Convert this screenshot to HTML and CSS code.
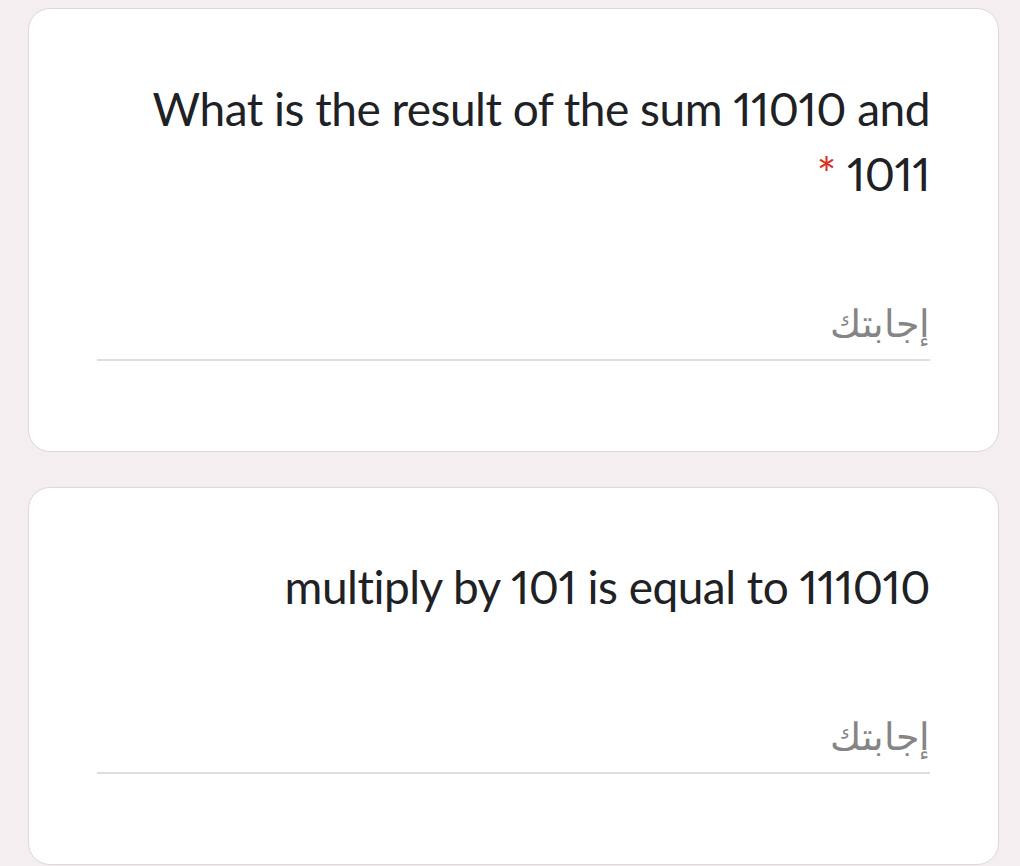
FILE: index.html
```html
<!DOCTYPE html>
<html lang="ar" dir="rtl">
<head>
<meta charset="utf-8">
<title>Form</title>
<link rel="stylesheet" href="styles.css">
</head>
<body>
<main class="form">
  <section class="card">
    <div class="title">What is the result of the sum 11010 and 1011 <span class="req">*</span></div>
    <div class="answer"><span class="placeholder">إجابتك</span></div>
  </section>
  <section class="card card-2">
    <div class="title">multiply by 101 is equal to 111010</div>
    <div class="answer"><span class="placeholder">إجابتك</span></div>
  </section>
</main>
</body>
</html>
```
FILE: styles.css
```css
html, body {
  margin: 0;
  padding: 0;
  background: #f5eef0;
}
body {
  font-family: Lato, Roboto, "Noto Sans", sans-serif;
  color: #202124;
}
.form {
  display: flex;
  flex-direction: column;
  gap: 35px;
  padding: 8px 21px 0 28px;
}
.card {
  background: #fff;
  border: 1px solid #dcd8da;
  border-radius: 22px;
  padding: 67px 68px 90px;
}
.card-2 {
  padding-top: 66px;
}
.title {
  font-size: 46px;
  line-height: 65px;
  letter-spacing: -0.5px;
  text-align: right;
  color: #202124;
  font-variant-numeric: proportional-nums;
  font-variant-ligatures: none;
  font-feature-settings: "pnum" 1, "liga" 0;
}
.req {
  color: #d93025;
  margin-left: 8px;
}
.answer {
  margin-top: 98px;
  border-bottom: 2px solid #dedede;
  padding-bottom: 8px;
  text-align: right;
  line-height: 40px;
}
.placeholder {
  font-family: "DejaVu Sans", "Noto Sans", sans-serif;
  font-size: 38px;
  line-height: 40px;
  color: #858585;
  font-weight: 200;
}
```
